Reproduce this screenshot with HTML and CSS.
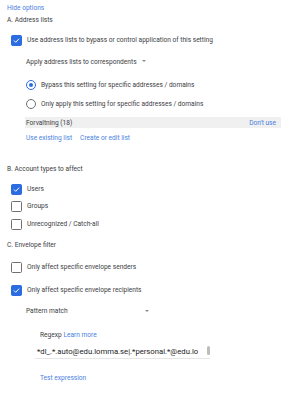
FILE: index.html
```html
<!DOCTYPE html>
<html>
<head>
<meta charset="utf-8">
<link rel="stylesheet" href="styles.css">
</head>
<body>
<div class="page">
  <div class="row r1"><a class="link">Hide options</a></div>
  <div class="row r2 heading">A. Address lists</div>
  <div class="row r3 check-row"><span class="cb on"><svg viewBox="0 0 11 11"><path d="M2.4 5.6 L4.5 7.7 L8.7 3.3" fill="none" stroke="#fff" stroke-width="1.2"/></svg></span><span>Use address lists to bypass or control application of this setting</span></div>
  <div class="row r4 indent select">Apply address lists to correspondents <span class="caret"></span></div>
  <div class="row r5 indent radio-row"><span class="radio on"></span><span>Bypass this setting for specific addresses / domains</span></div>
  <div class="row r6 indent radio-row"><span class="radio"></span><span>Only apply this setting for specific addresses / domains</span></div>
  <div class="row r7 listbar"><span>Forvaltning (18)</span><a class="link">Don't use</a></div>
  <div class="row r8 indent links"><a class="link">Use existing list</a><a class="link">Create or edit list</a></div>
  <div class="row r9 heading">B. Account types to affect</div>
  <div class="row r10 check-row"><span class="cb on"><svg viewBox="0 0 11 11"><path d="M2.4 5.6 L4.5 7.7 L8.7 3.3" fill="none" stroke="#fff" stroke-width="1.2"/></svg></span><span>Users</span></div>
  <div class="row r11 check-row"><span class="cb"></span><span>Groups</span></div>
  <div class="row r12 check-row"><span class="cb"></span><span>Unrecognized / Catch-all</span></div>
  <div class="row r13 heading">C. Envelope filter</div>
  <div class="row r14 check-row"><span class="cb"></span><span>Only affect specific envelope senders</span></div>
  <div class="row r15 check-row"><span class="cb on"><svg viewBox="0 0 11 11"><path d="M2.4 5.6 L4.5 7.7 L8.7 3.3" fill="none" stroke="#fff" stroke-width="1.2"/></svg></span><span>Only affect specific envelope recipients</span></div>
  <div class="row r16 indent select pm"><span class="pm-label">Pattern match</span><span class="caret"></span></div>
  <div class="row r17 indent2">Regexp&nbsp;<a class="link">Learn more</a></div>
  <div class="row r18 textarea"><span class="ta-text">*dl_.*.auto@edu.lomma.se|.*personal.*@edu.lo</span><span class="thumb"></span></div>
  <div class="row r19 indent2"><a class="link">Test expression</a></div>
</div>
</body>
</html>
```
FILE: styles.css
```css
html, body { margin: 0; padding: 0; background: #fff; }
body {
  font-family: Roboto, "Liberation Sans", sans-serif;
  font-size: 6.6px;
  color: #3c4043;
  width: 289px;
  height: 400px;
  overflow: hidden;
}
.page { padding: 2px 0 0 7px; }
.row { display: flex; align-items: center; white-space: nowrap; }
.link { color: #4a7fe0; text-decoration: none; }
.heading { color: #3c4043; }
.indent { padding-left: 19px; }
.indent2 { padding-left: 33px; }

.r1 { height: 12px; }
.r2 { height: 12px; }
.r3 { height: 16px; margin-top: 6px; }
.r4 { height: 14px; margin-top: 7px; }
.r5 { height: 14px; margin-top: 9px; }
.r6 { height: 14px; margin-top: 5px; }
.r7 { height: 11px; margin-top: 6px; }
.r8 { height: 12px; margin-top: 4px; }
.r9 { height: 12px; margin-top: 19px; }
.r10 { height: 14px; margin-top: 7px; }
.r11 { height: 14px; margin-top: 3px; }
.r12 { height: 14px; margin-top: 4px; }
.r13 { height: 12px; margin-top: 8px; }
.r14 { height: 14px; margin-top: 9px; }
.r15 { height: 14px; margin-top: 9px; }
.r16 { height: 12px; margin-top: 8px; }
.r17 { height: 12px; margin-top: 12px; }
.r18 { height: 14px; margin-top: 4px; }
.r19 { height: 12px; margin-top: 13px; }

.check-row { padding-left: 4px; gap: 5px; }
.cb {
  width: 9px; height: 9px;
  border: 1px solid #6f6f6f;
  border-radius: 1.5px;
  display: inline-flex;
  box-sizing: content-box;
}
.cb.on { background: #2b6de0; border-color: #2b6de0; }
.cb svg { width: 9px; height: 9px; }

.radio-row { gap: 5px; }
.radio {
  width: 8px; height: 8px;
  border: 1px solid #6f6f6f;
  border-radius: 50%;
  display: inline-flex;
  align-items: center;
  justify-content: center;
}
.radio.on { border-color: #2b6de0; }
.radio.on::after {
  content: "";
  width: 4px; height: 4px;
  border-radius: 50%;
  background: #2b6de0;
}

.select { gap: 0; }
.caret {
  display: inline-block;
  width: 0; height: 0;
  border-left: 2.5px solid transparent;
  border-right: 2.5px solid transparent;
  border-top: 2.5px solid #8a8a8a;
  margin-left: 5px;
  margin-top: -2px;
}
.pm-label { width: 117px; }
.pm .caret { margin-left: 2px; margin-top: -1px; }

.listbar {
  margin-left: 18px;
  width: 250px;
  padding: 0 5px 0 1px;
  background: #f0f0f0;
  justify-content: space-between;
  color: #3c4043;
}
.links { gap: 8px; }

.textarea {
  margin-left: 28px;
  width: 175px;
  padding-left: 2px;
  border-bottom: 1px solid #e6e6e6;
  justify-content: space-between;
  box-sizing: border-box;
}
.ta-text { font-size: 7.7px; color: #222; }
.thumb {
  width: 3px; height: 9px;
  background: #bdbdbd;
  border-radius: 1.5px;
  margin-bottom: 2px;
}
```
